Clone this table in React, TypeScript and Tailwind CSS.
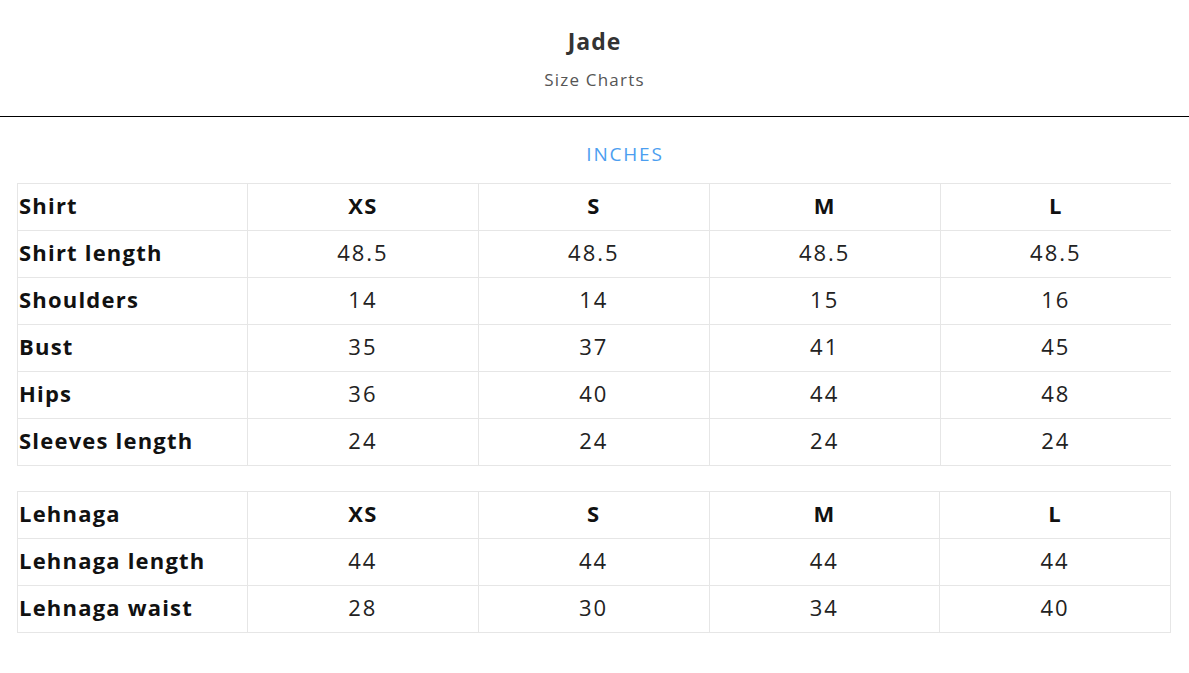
const shirt = {
  title: 'Shirt',
  rows: [
    ['Shirt length', '48.5', '48.5', '48.5', '48.5'],
    ['Shoulders', '14', '14', '15', '16'],
    ['Bust', '35', '37', '41', '45'],
    ['Hips', '36', '40', '44', '48'],
    ['Sleeves length', '24', '24', '24', '24'],
  ],
}

const lehnaga = {
  title: 'Lehnaga',
  rows: [
    ['Lehnaga length', '44', '44', '44', '44'],
    ['Lehnaga waist', '28', '30', '34', '40'],
  ],
}

const sizes = ['XS', 'S', 'M', 'L']

function SizeTable({ title, rows, closed }: { title: string; rows: string[][]; closed?: boolean }) {
  const edge = closed ? 'border-r' : 'border-r-0'
  return (
    <table className="w-full table-fixed border-collapse text-[22px] text-[#111]">
      <colgroup>
        <col className="w-[230px]" />
        <col />
        <col />
        <col />
        <col />
      </colgroup>
      <tbody>
        <tr className="h-[47px]">
          <td className="border border-[#e6e6e6] pb-[4px] pl-[1px] font-bold tracking-[1.2px]">{title}</td>
          {sizes.map((s, i) => (
            <td
              key={s}
              className={`border border-[#e6e6e6] pb-[4px] text-center font-bold tracking-[1.2px] ${i === 3 ? edge : ''}`}
            >
              {s}
            </td>
          ))}
        </tr>
        {rows.map((r) => (
          <tr key={r[0]} className="h-[47px]">
            <td className="border border-[#e6e6e6] pb-[4px] pl-[1px] font-bold tracking-[1.2px]">{r[0]}</td>
            {r.slice(1).map((v, i) => (
              <td
                key={i}
                className={`border border-[#e6e6e6] pb-[4px] text-center tracking-[2px] text-[#222] ${i === 3 ? edge : ''}`}
              >
                {v}
              </td>
            ))}
          </tr>
        ))}
      </tbody>
    </table>
  )
}

export default function App() {
  return (
    <div className="min-h-screen bg-white font-['Open_Sans',sans-serif]">
      <div className="flex h-[117px] flex-col items-center border-b border-black">
        <h1 className="mt-[26px] text-[23px] font-bold leading-[30px] tracking-[1px] text-[#333]">Jade</h1>
        <p className="mt-[13px] text-[17px] leading-[22px] tracking-[1.2px] text-[#555]">Size Charts</p>
      </div>
      <div className="px-[17px] pr-[18px]">
        <div className="pt-[25px] pb-[17px] pl-[62px] text-center text-[19px] leading-[24px] tracking-[1.8px] text-[#4b9ef0]">
          INCHES
        </div>
        <SizeTable title={shirt.title} rows={shirt.rows} />
        <div className="h-[25px]" />
        <SizeTable title={lehnaga.title} rows={lehnaga.rows} closed />
      </div>
    </div>
  )
}
